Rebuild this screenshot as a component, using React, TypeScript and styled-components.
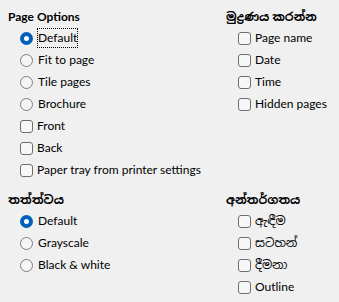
import React, { FC } from 'react';
import styled, { createGlobalStyle, css } from 'styled-components';

const GlobalStyle = createGlobalStyle`
  html, body {
    margin: 0;
    padding: 0;
    background: #f0f0f0;
  }
  body {
    font-family: Lato, "Noto Sans Sinhala", "Noto Sans", "Liberation Sans", sans-serif;
    font-size: 12px;
    color: #000;
  }
`;

type Option = {
  label: string;
  checked?: boolean;
  focused?: boolean;
};

type Section = {
  title: string;
  kind: 'radio' | 'check';
  items: Option[];
};

const pageOptions: Section = {
  title: 'Page Options',
  kind: 'radio',
  items: [
    { label: 'Default', checked: true, focused: true },
    { label: 'Fit to page' },
    { label: 'Tile pages' },
    { label: 'Brochure' },
  ],
};

const printOptions: Section = {
  title: 'මුද්‍රණය කරන්න',
  kind: 'check',
  items: [{ label: 'Page name' }, { label: 'Date' }, { label: 'Time' }, { label: 'Hidden pages' }],
};

const quality: Section = {
  title: 'තත්ත්වය',
  kind: 'radio',
  items: [{ label: 'Default', checked: true }, { label: 'Grayscale' }, { label: 'Black & white' }],
};

const contents: Section = {
  title: 'අන්තර්ගතය',
  kind: 'check',
  items: [{ label: 'ඇඳීම' }, { label: 'සටහන්' }, { label: 'දීමනා' }, { label: 'Outline' }],
};

const paperSides: Option[] = [{ label: 'Front' }, { label: 'Back' }, { label: 'Paper tray from printer settings' }];

const Row: FC<{ kind: 'radio' | 'check'; option: Option }> = ({ kind, option }) => (
  <ItemRow>
    {kind === 'radio' ? <Radio $checked={!!option.checked} /> : <Check />}
    <ItemLabel $kind={kind} $focused={!!option.focused}>
      {option.label}
    </ItemLabel>
  </ItemRow>
);

const Group: FC<{ section: Section; extra?: Option[] }> = ({ section, extra }) => (
  <GroupBox>
    <Heading>{section.title}</Heading>
    <Items>
      {section.items.map((o) => (
        <Row key={o.label} kind={section.kind} option={o} />
      ))}
      {extra && extra.map((o) => <Row key={o.label} kind="check" option={o} />)}
    </Items>
  </GroupBox>
);

export default function App() {
  return (
    <>
      <GlobalStyle />
      <Page>
        <Group section={pageOptions} extra={paperSides} />
        <Group section={printOptions} />
        <Group section={quality} />
        <Group section={contents} />
      </Page>
    </>
  );
}

const Page = styled.div`
  display: grid;
  grid-template-columns: 218px 1fr;
  row-gap: 6px;
  padding: 8px 0 0 8px;
  width: 339px;
  height: 302px;
  box-sizing: border-box;
`;

const GroupBox = styled.div`
  display: flex;
  flex-direction: column;
`;

const Heading = styled.div`
  font-weight: 700;
  height: 19px;
  line-height: 18px;
  white-space: nowrap;
`;

const Items = styled.div`
  display: flex;
  flex-direction: column;
  padding-left: 12px;
`;

const ItemRow = styled.div`
  display: flex;
  align-items: center;
  height: 22px;
  white-space: nowrap;
`;

const Radio = styled.span<{ $checked: boolean }>`
  box-sizing: border-box;
  width: 13px;
  height: 13px;
  border-radius: 50%;
  flex: none;
  ${({ $checked }) =>
    $checked
      ? css`
          background: #ffffff;
          border: 4px solid #005fb8;
        `
      : css`
          background: #f5f5f5;
          border: 1px solid #7e7e7e;
        `}
`;

const Check = styled.span`
  box-sizing: border-box;
  width: 13px;
  height: 13px;
  border-radius: 3px;
  border: 1px solid #6e6e6e;
  background: #f7f7f7;
  flex: none;
`;

const ItemLabel = styled.span<{ $kind: 'radio' | 'check'; $focused: boolean }>`
  margin-left: ${({ $kind }) => ($kind === 'radio' ? '4px' : '3px')};
  padding: 1px 0;
  line-height: 16px;
  border: 1px dotted ${({ $focused }) => ($focused ? '#000' : 'transparent')};
`;
